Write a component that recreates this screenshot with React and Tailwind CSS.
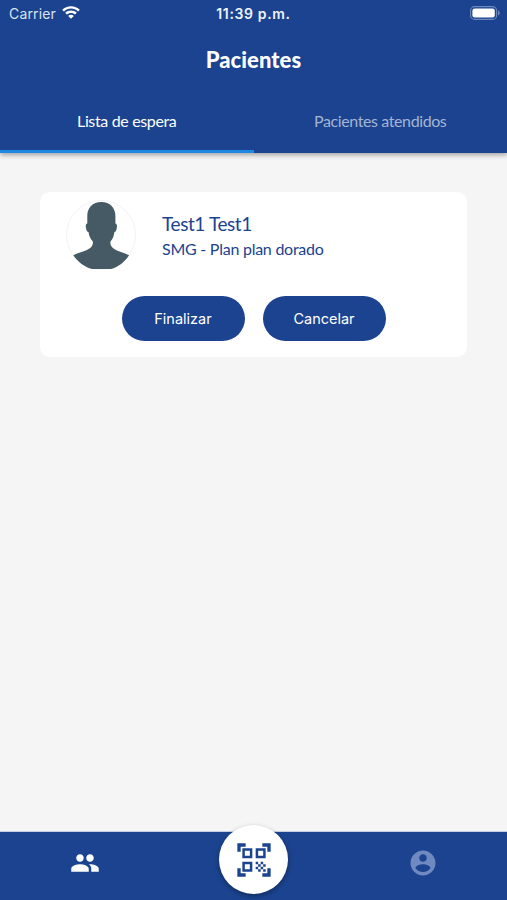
import { useState } from 'react';
import { MdPeople, MdQrCodeScanner } from 'react-icons/md';

const StatusBar = () => (
  <div className="grid grid-cols-3 items-center h-[26px] px-[9px] text-white font-['Inter','Roboto',sans-serif]">
    <div className="flex items-center gap-[6px]">
      <span className="text-[14px] tracking-[0.15px] text-[#d9e3f5]">Carrier</span>
      <svg width="18" height="14" viewBox="0 0 18 14" fill="currentColor">
        <path d="M9 0.2C5.6 0.2 2.5 1.5 0.2 3.7L1.9 5.5C3.8 3.7 6.3 2.6 9 2.6s5.2 1.1 7.1 2.9l1.7-1.8C15.5 1.5 12.4 0.2 9 0.2z" />
        <path d="M9 4.5c-2.3 0-4.3 0.9-5.8 2.3l1.7 1.8C6 7.6 7.4 6.9 9 6.9s3 0.7 4.1 1.7l1.7-1.8C13.3 5.4 11.3 4.5 9 4.5z" />
        <path d="M9 8.8c-1.1 0-2.1 0.4-2.8 1.1L9 12.8l2.8-2.9C11.1 9.2 10.1 8.8 9 8.8z" />
      </svg>
    </div>
    <span className="text-center text-[14px] font-semibold tracking-[0.65px] whitespace-nowrap text-[#eef3fc]">11:39 p.m.</span>
    <svg className="justify-self-end -mr-[2px]" width="30" height="14" viewBox="0 0 30 14">
      <rect x="0.6" y="0.6" width="26" height="12.8" rx="4" fill="none" stroke="#6f89bd" strokeWidth="1.1" />
      <rect x="2.4" y="2.4" width="22.4" height="9.2" rx="2.3" fill="#fff" />
      <path d="M28 4.6c1.1 0.4 1.7 1.3 1.7 2.4s-0.6 2-1.7 2.4z" fill="#6f89bd" />
    </svg>
  </div>
);

const Avatar = () => (
  <svg className="shrink-0" width="70" height="70" viewBox="0 0 70 70">
    <circle cx="35" cy="35" r="34.5" fill="#fff" stroke="#f2f2f3" />
    <path
      d="M35.300 2C26.500 2 21.300 8 21.300 16v7.500c-1.700 0.200-1.800 2.700-1.200 5 0.500 2.200 1 3.400 2.400 3.600 0.500 4 2 6.800 4.300 9.400 0.500 2.700-0.800 5-3 6.800-4 3-10.500 4-16.500 6.900C12 62 18.500 67 26 69h19c7.500-2 13.500-7 18.100-13.800-6-2.900-12.200-3.900-15.900-6.900-2.200-1.800-3.200-4.100-2.700-6.800 2.300-2.600 3.400-5.400 3.900-9.400 1.400-0.200 1.800-1.400 2.300-3.600 0.500-2.300 0.400-4.800-1.300-5V16C49.400 8 44.100 2 35.300 2z"
      fill="#455a64"
    />
  </svg>
);

const AccountIcon = () => (
  <svg width="30" height="30" viewBox="0 0 24 24" fill="#6f8ac1">
    <path d="M12 2C6.480 2 2 6.480 2 12s4.480 10 10 10 10-4.480 10-10S17.520 2 12 2zm0 3c1.660 0 3 1.340 3 3s-1.340 3-3 3-3-1.340-3-3 1.340-3 3-3zm0 14.200c-2.500 0-4.710-1.280-6-3.220.03-1.990 4-3.080 6-3.080 1.990 0 5.970 1.090 6 3.080-1.290 1.940-3.500 3.220-6 3.220z" />
  </svg>
);

const tabs = [
  { id: 'espera', label: 'Lista de espera' },
  { id: 'atendidos', label: 'Pacientes atendidos' },
];

const PatientCard = ({ name, plan }) => (
  <div className="h-[165px] rounded-[10px] bg-white pt-[8px]">
    <div className="flex pl-[26px]">
      <Avatar />
      <div className="ml-[26px] mt-[11px] text-[#1b438f]">
        <p className="text-[19px] leading-[26px] tracking-[-0.4px]">{name}</p>
        <p className="text-[16px] leading-[24px] tracking-[-0.25px]">{plan}</p>
      </div>
    </div>
    <div className="mt-[26px] flex justify-center gap-[18px] font-['Inter','Roboto',sans-serif] text-[14.5px] text-white">
      <button className="h-[45px] w-[123px] rounded-full bg-[#1b438f]">Finalizar</button>
      <button className="h-[45px] w-[123px] rounded-full bg-[#1b438f]">Cancelar</button>
    </div>
  </div>
);

export default function App() {
  const [activeTab, setActiveTab] = useState('espera');

  return (
    <div className="flex h-[900px] w-[507px] flex-col overflow-hidden bg-[#f5f5f5] font-['Lato',sans-serif]">
      {/* Header */}
      <header className="h-[153px] shrink-0 bg-[#1b438f] shadow-[0_2px_5px_rgba(0,0,0,0.35)]">
        <StatusBar />
        <h1 className="mt-[18px] text-center text-[22px] font-black leading-[32px] tracking-[0.05px] text-white">Pacientes</h1>
        <div className="mt-[14px] grid h-[63px] grid-cols-2">
          {tabs.map((tab) => (
            <button
              key={tab.id}
              onClick={() => setActiveTab(tab.id)}
              className={
                activeTab === tab.id
                  ? 'border-b-[3px] border-[#1e88e5] pt-[2px] text-[16px] tracking-[-0.35px] text-white'
                  : 'border-b-[3px] border-transparent pt-[2px] text-[16px] tracking-[-0.4px] text-[#a4b4d2]'
              }
            >
              {tab.label}
            </button>
          ))}
        </div>
      </header>

      {/* Patient list */}
      <main className="flex-1 px-[40px] pt-[39px]">
        <PatientCard name="Test1 Test1" plan="SMG - Plan plan dorado" />
      </main>

      {/* Bottom navigation */}
      <nav className="grid h-[69px] shrink-0 grid-cols-3 border-t border-[#c5cfe2] bg-[#1b438f]">
        <button className="flex justify-center pt-[16px]">
          <MdPeople size={30} color="#fff" />
        </button>
        <div className="flex justify-center">
          <button className="-mt-[7px] flex h-[69px] w-[69px] items-center justify-center rounded-full bg-white shadow-[0_2px_5px_rgba(0,0,0,0.35)]">
            <MdQrCodeScanner size={40} color="#1b438f" />
          </button>
        </div>
        <button className="flex justify-center pt-[16px]">
          <AccountIcon />
        </button>
      </nav>
    </div>
  );
}
